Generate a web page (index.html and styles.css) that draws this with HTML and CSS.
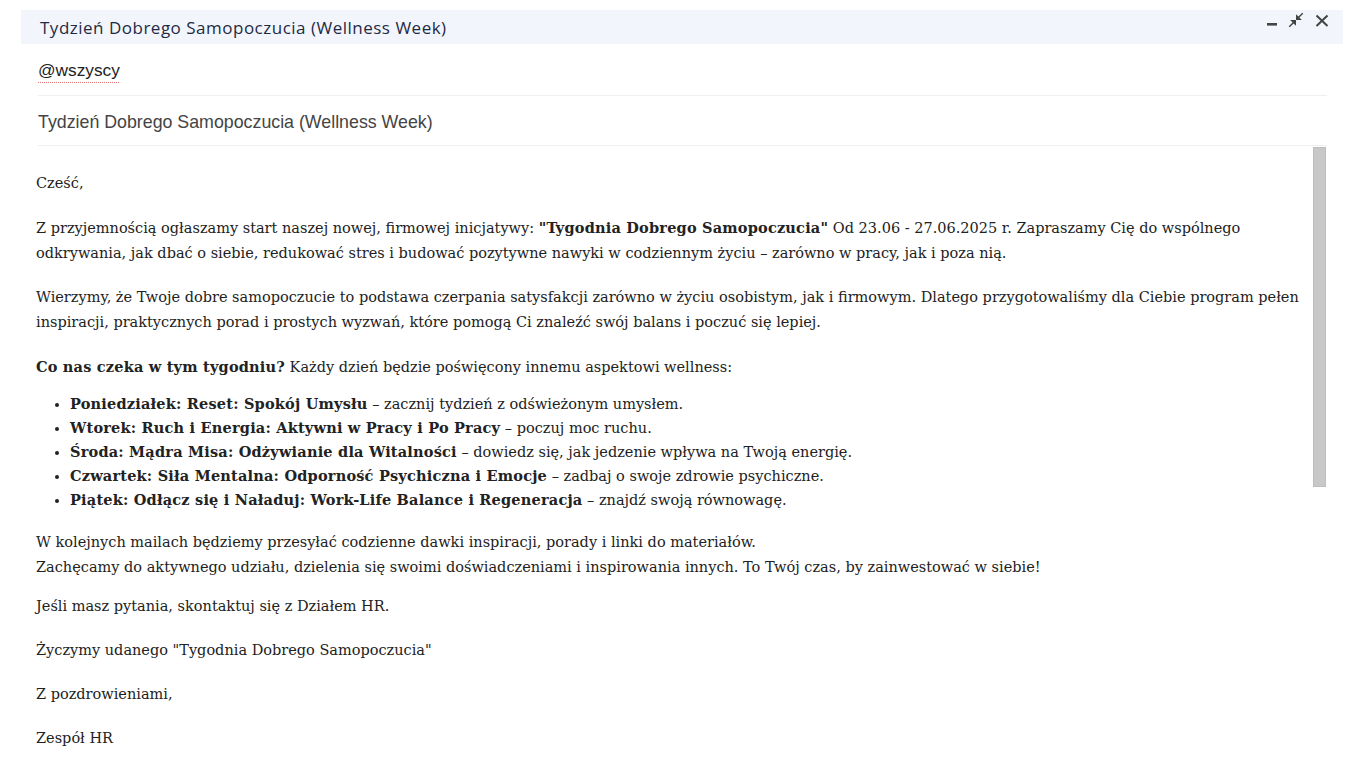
FILE: index.html
```html
<!DOCTYPE html>
<html lang="pl">
<head>
<meta charset="utf-8">
<title>Tydzień Dobrego Samopoczucia (Wellness Week)</title>
<link rel="stylesheet" href="styles.css">
</head>
<body>
<div class="compose">
  <div class="titlebar">
    <span class="title">Tydzień Dobrego Samopoczucia (Wellness Week)</span>
    <div class="actions">
      <svg class="ico" viewBox="0 0 12 16" width="12" height="16"><rect x="0" y="11" width="10" height="2.6" fill="#444"/></svg>
      <svg class="ico" viewBox="1 1 22 22" width="16" height="16"><path d="M22 3.41L16.71 8.7 20 12h-8V4l3.29 3.29L20.59 2 22 3.41zM3.41 22l5.29-5.29L12 20v-8H4l3.29 3.29L2 20.59 3.41 22z" fill="#444"/></svg>
      <svg class="ico" viewBox="0 0 14 16" width="14" height="16"><path d="M1.5 3.5 L12.5 14 M12.5 3.5 L1.5 14" stroke="#444" stroke-width="2" fill="none"/></svg>
    </div>
  </div>
  <div class="field recipients"><span class="chip">@wszyscy</span></div>
  <div class="field subject">Tydzień Dobrego Samopoczucia (Wellness Week)</div>
  <div class="body">
    <div class="thumb"></div>
    <div class="content">
      <p>Cześć,</p>
      <p>Z przyjemnością ogłaszamy start naszej nowej, firmowej inicjatywy: <b>"Tygodnia Dobrego Samopoczucia"</b> Od 23.06 - 27.06.2025 r. Zapraszamy Cię do wspólnego<br>odkrywania, jak dbać o siebie, redukować stres i budować pozytywne nawyki w codziennym życiu – zarówno w pracy, jak i poza nią.</p>
      <p>Wierzymy, że Twoje dobre samopoczucie to podstawa czerpania satysfakcji zarówno w życiu osobistym, jak i firmowym. Dlatego przygotowaliśmy dla Ciebie program pełen<br>inspiracji, praktycznych porad i prostych wyzwań, które pomogą Ci znaleźć swój balans i poczuć się lepiej.</p>
      <p><b>Co nas czeka w tym tygodniu?</b> Każdy dzień będzie poświęcony innemu aspektowi wellness:</p>
      <ul>
        <li><b>Poniedziałek: Reset: Spokój Umysłu</b> – zacznij tydzień z odświeżonym umysłem.</li>
        <li><b>Wtorek: Ruch i Energia: Aktywni w Pracy i Po Pracy</b> – poczuj moc ruchu.</li>
        <li><b>Środa: Mądra Misa: Odżywianie dla Witalności</b> – dowiedz się, jak jedzenie wpływa na Twoją energię.</li>
        <li><b>Czwartek: Siła Mentalna: Odporność Psychiczna i Emocje</b> – zadbaj o swoje zdrowie psychiczne.</li>
        <li><b>Piątek: Odłącz się i Naładuj: Work-Life Balance i Regeneracja</b> – znajdź swoją równowagę.</li>
      </ul>
      <p class="tight">W kolejnych mailach będziemy przesyłać codzienne dawki inspiracji, porady i linki do materiałów.<br>Zachęcamy do aktywnego udziału, dzielenia się swoimi doświadczeniami i inspirowania innych. To Twój czas, by zainwestować w siebie!</p>
      <p>Jeśli masz pytania, skontaktuj się z Działem HR.</p>
      <p>Życzymy udanego "Tygodnia Dobrego Samopoczucia"</p>
      <p>Z pozdrowieniami,</p>
      <p>Zespół HR</p>
    </div>
  </div>
</div>
</body>
</html>
```

FILE: styles.css
```css
html, body {
  margin: 0;
  padding: 0;
  background: #fff;
}
body {
  font-family: "Liberation Sans", Arial, sans-serif;
  color: #222;
  overflow: hidden;
}
.compose {
  padding-top: 10px;
  padding-left: 21px;
  width: 1322px;
}
.titlebar {
  height: 34px;
  background: #f2f6fc;
  display: flex;
  align-items: center;
  justify-content: space-between;
  padding-left: 19px;
  padding-right: 14px;
}
.title {
  font-family: "Open Sans", "Liberation Sans", sans-serif;
  font-size: 17px;
  font-weight: 500;
  color: #1f2a44;
  letter-spacing: 0.5px;
}
.actions {
  display: flex;
  align-self: flex-start;
  margin-top: 2px;
  align-items: flex-start;
}
.ico {
  display: block;
}
.ico + .ico {
  margin-left: 9px;
}
.ico:last-child {
  margin-left: 11px;
}
.field {
  margin-left: 17px;
  margin-right: 16px;
  border-bottom: 1px solid #efefef;
  display: flex;
  align-items: center;
  box-sizing: border-box;
}
.recipients {
  height: 52px;
  padding-top: 2px;
}
.chip {
  color: #222;
  font-size: 17.3px;
  text-decoration: underline dotted #e57373;
  text-underline-offset: 6px;
  text-decoration-thickness: 1px;
}
.subject {
  height: 50px;
  padding-top: 3px;
  font-size: 17.8px;
  color: #444;
}
.body {
  position: relative;
  margin-left: 15px;
  padding-top: 25px;
  font-family: "DejaVu Serif", Georgia, serif;
  font-size: 14.5px;
  line-height: 25px;
  color: #222;
}
.body b {
  letter-spacing: 0.2px;
}
.content {
  max-width: 1268px;
}
.thumb {
  position: absolute;
  right: 17px;
  top: 1px;
  width: 11px;
  height: 338px;
  background: #c8c8c8;
  border: 1px solid #bdbdbd;
}
.body p {
  margin: 0 0 19px 0;
}
.body ul {
  margin: -7px 0 18px 0;
  padding-left: 34px;
}
.body li {
  line-height: 24px;
}
.body p.tight {
  margin-bottom: 14px;
}
```
